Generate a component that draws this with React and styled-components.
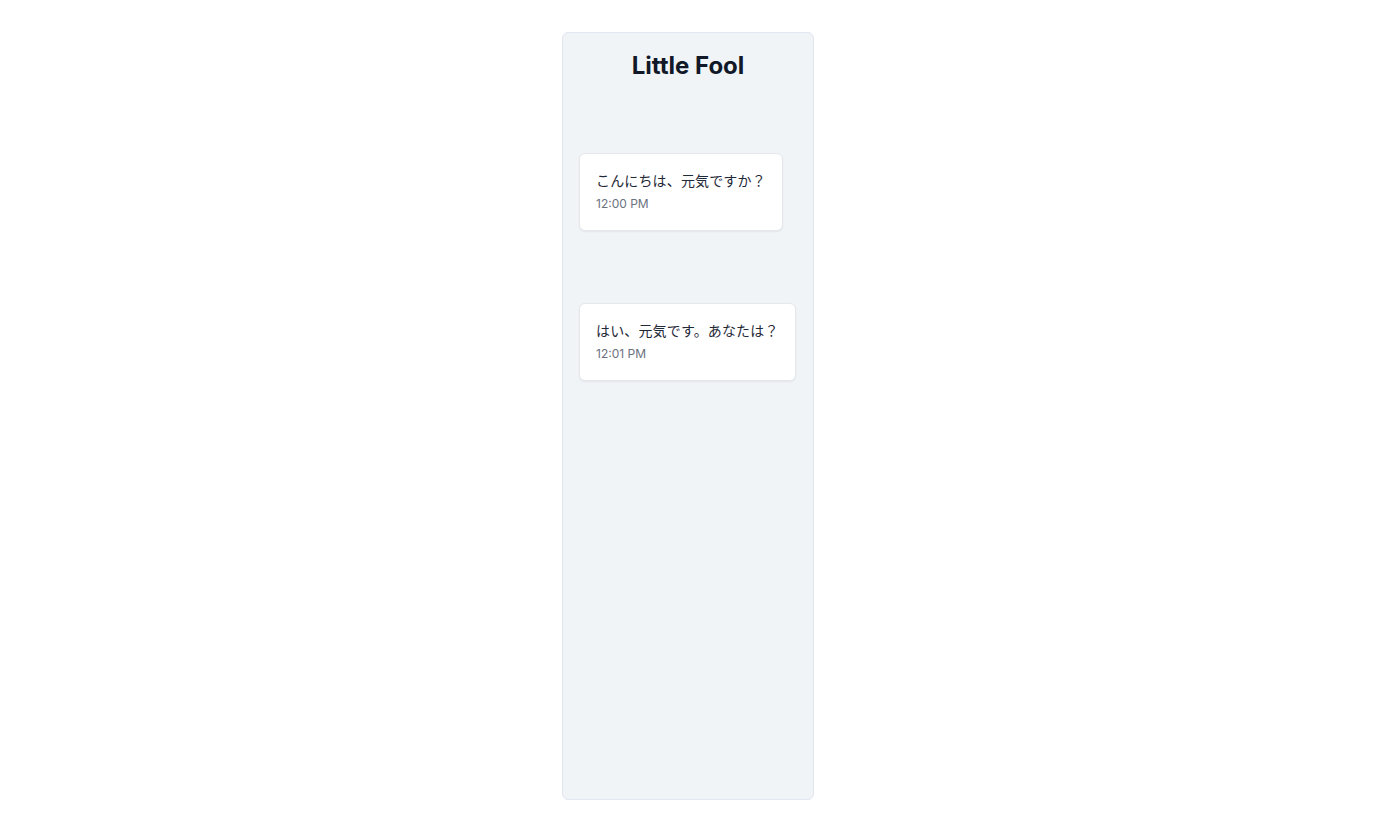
import React from "react";
import styled, { createGlobalStyle } from "styled-components";

const GlobalStyle = createGlobalStyle`
  html, body {
    margin: 0;
    padding: 0;
    background: #ffffff;
  }
  body {
    font-family: Inter, "Noto Sans CJK JP", "Noto Sans", sans-serif;
    color: #1f2937;
  }
  * {
    box-sizing: border-box;
  }
`;

const Page = styled.div`
  height: 100vh;
  padding: 32px 0;
  display: flex;
  justify-content: center;
`;

const Panel = styled.div`
  width: 252px;
  height: 100%;
  background: #f0f4f7;
  border: 1px solid #e2e8f0;
  border-radius: 6px;
  padding: 17px 16px;
  display: flex;
  flex-direction: column;
`;

const Title = styled.h1`
  margin: 0;
  font-size: 24px;
  line-height: 32px;
  font-weight: 700;
  text-align: center;
  color: #111827;
`;

const MessageList = styled.div`
  margin-top: 71px;
  display: flex;
  flex-direction: column;
  align-items: flex-start;
  gap: 72px;
`;

const Bubble = styled.div`
  background: #ffffff;
  border: 1px solid #e5e7eb;
  border-radius: 6px;
  box-shadow: 0 1px 2px rgba(15, 23, 42, 0.06);
  padding: 16px 16px 17px 16px;
`;

const Text = styled.div`
  font-size: 14px;
  line-height: 21px;
  letter-spacing: 0.15px;
  color: #1f2937;
  white-space: nowrap;
`;

const Time = styled.div`
  margin-top: 4px;
  font-size: 12px;
  line-height: 18px;
  color: #6b7280;
`;

const messages = [
  { text: "こんにちは、元気ですか？", time: "12:00 PM" },
  { text: "はい、元気です。あなたは？", time: "12:01 PM" },
];

export default function App() {
  return (
    <>
      <GlobalStyle />
      <Page>
        <Panel>
          <Title>Little Fool</Title>
          <MessageList>
            {messages.map((m) => (
              <Bubble key={m.time}>
                <Text>{m.text}</Text>
                <Time>{m.time}</Time>
              </Bubble>
            ))}
          </MessageList>
        </Panel>
      </Page>
    </>
  );
}
